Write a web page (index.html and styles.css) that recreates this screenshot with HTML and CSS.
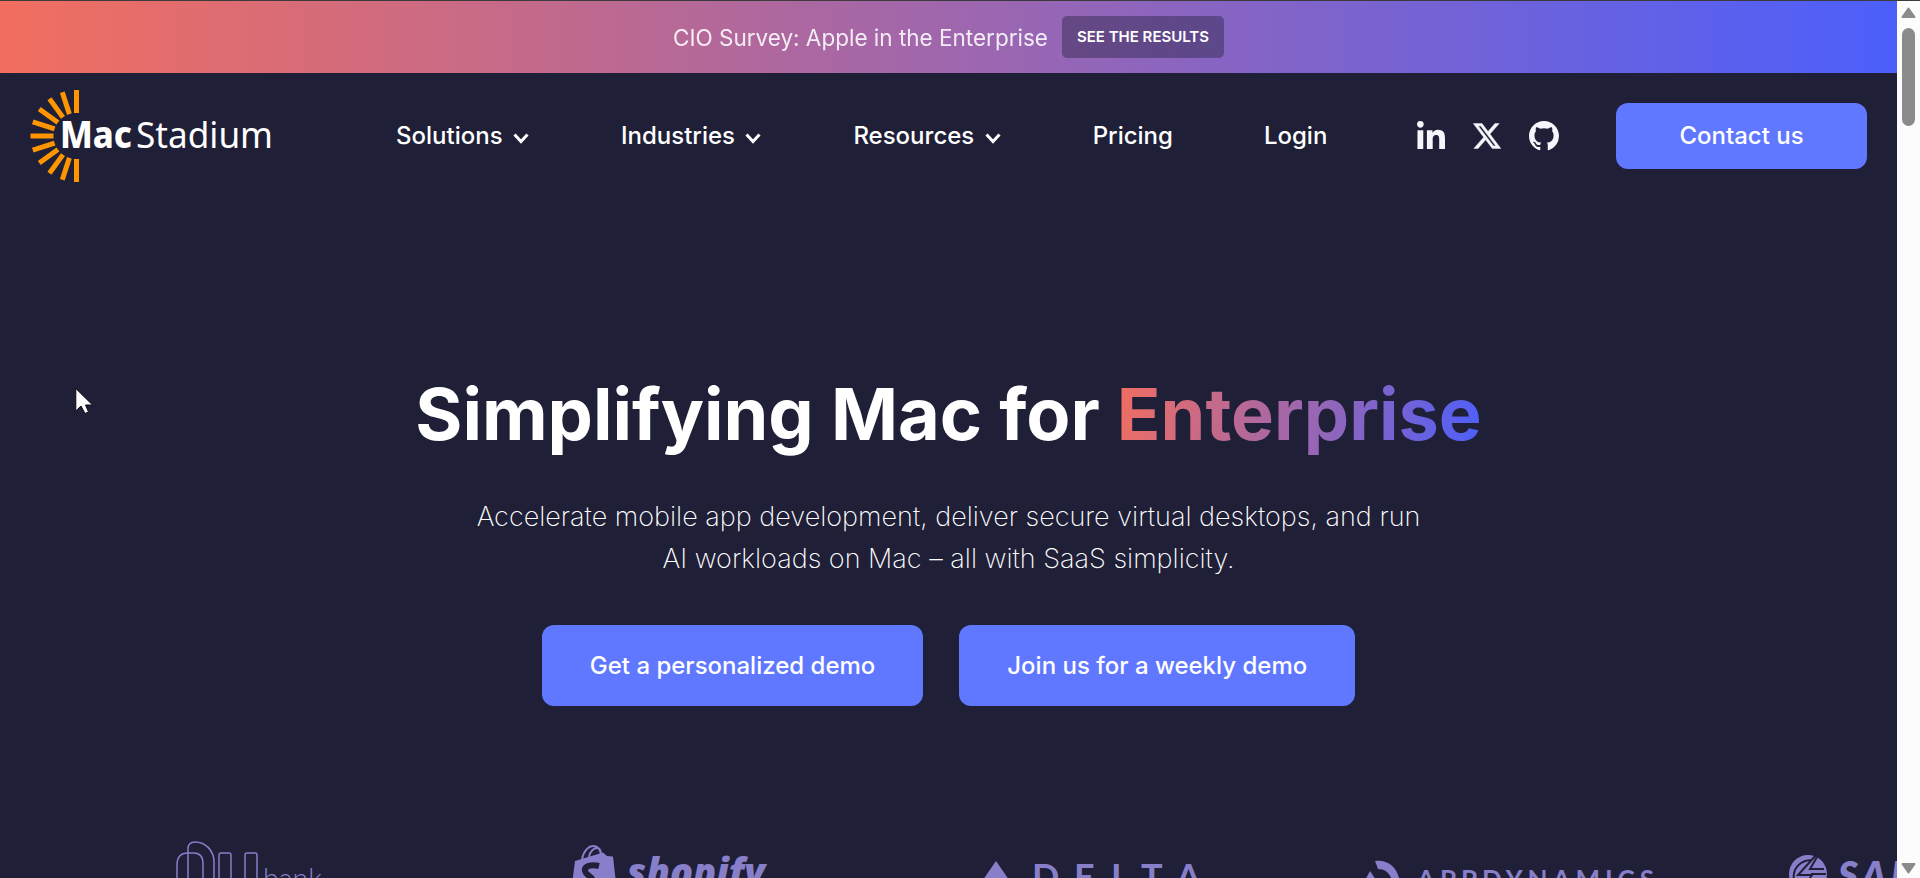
FILE: index.html
```html
<!DOCTYPE html>
<html lang="en">
<head>
    <meta charset="UTF-8">
    <meta name="viewport" content="width=device-width, initial-scale=1.0">
    <title>MacStadium</title>
    <link rel="stylesheet" href="styles.css">
</head>
<body>
    <div class="window">
        <div class="page">
            <div class="banner">
                <span class="banner-text">CIO Survey: Apple in the Enterprise</span>
                <a class="banner-button">SEE THE RESULTS</a>
            </div>

            <header class="header">
                <svg class="logo" viewBox="0 0 244 92" width="244" height="92">
                    <g stroke="#ff9500" stroke-width="5">
                        <path d="M46.5 0v23" />
                        <path d="M46.5 0v23" transform="rotate(-18 46.5 46)" />
                        <path d="M46.5 0v23" transform="rotate(-36 46.5 46)" />
                        <path d="M46.5 0v23" transform="rotate(-54 46.5 46)" />
                        <path d="M46.5 0v23" transform="rotate(-72 46.5 46)" />
                        <path d="M46.5 0v23" transform="rotate(-90 46.5 46)" />
                        <path d="M46.5 0v23" transform="rotate(-108 46.5 46)" />
                        <path d="M46.5 0v23" transform="rotate(-126 46.5 46)" />
                        <path d="M46.5 0v23" transform="rotate(-144 46.5 46)" />
                        <path d="M46.5 0v23" transform="rotate(-162 46.5 46)" />
                        <path d="M46.5 0v23" transform="rotate(-180 46.5 46)" />
                    </g>
                    <text class="logo-bold" x="30" y="58" textLength="72" lengthAdjust="spacingAndGlyphs">Mac</text>
                    <text class="logo-light" x="106" y="58" textLength="137" lengthAdjust="spacingAndGlyphs">Stadium</text>
                </svg>

                <nav class="nav">
                    <a>Solutions <svg class="chevron" viewBox="0 0 16 11"><path d="M1.5 1.5L8 8.5l6.500-7" /></svg></a>
                    <a>Industries <svg class="chevron" viewBox="0 0 16 11"><path d="M1.5 1.5L8 8.5l6.500-7" /></svg></a>
                    <a>Resources <svg class="chevron" viewBox="0 0 16 11"><path d="M1.5 1.5L8 8.5l6.500-7" /></svg></a>
                    <a>Pricing</a>
                    <a>Login</a>
                </nav>

                <div class="social">
                    <svg class="linkedin" viewBox="0 0 448 448" width="28" height="28"><path d="M100.280 448H7.400V148.900h92.880zM53.790 108.100C24.090 108.100 0 83.500 0 53.800a53.790 53.790 0 0 1 107.580 0c0 29.700-24.100 54.300-53.790 54.300zM447.900 448h-92.680V302.400c0-34.700-.7-79.200-48.290-79.200-48.290 0-55.690 37.700-55.690 76.700V448h-92.780V148.900h89.080v40.800h1.300c12.400-23.500 42.690-48.300 87.880-48.300 94 0 111.280 61.900 111.280 142.300V448z" /></svg>
                    <svg class="x" viewBox="1 2 22 20" width="28" height="26"><path d="M18.244 2.250h3.308l-7.227 8.260 8.502 11.240H16.170l-5.214-6.817L4.990 21.750H1.680l7.730-8.835L1.254 2.250H8.080l4.713 6.231zm-1.161 17.520h1.833L7.084 4.126H5.117z" /></svg>
                    <svg viewBox="0 0 16 16" width="30" height="30"><path d="M8 0C3.580 0 0 3.580 0 8c0 3.540 2.290 6.530 5.470 7.590.4.070.55-.17.55-.38 0-.19-.01-.82-.01-1.490-2.010.37-2.530-.49-2.690-.94-.09-.23-.48-.94-.82-1.130-.28-.15-.68-.52-.01-.53.63-.01 1.080.58 1.230.82.72 1.210 1.870.87 2.330.66.07-.52.28-.87.51-1.070-1.780-.2-3.640-.89-3.640-3.950 0-.87.31-1.590.82-2.150-.08-.2-.36-1.020.08-2.120 0 0 .67-.21 2.200.82.64-.18 1.320-.27 2-.27s1.360.09 2 .27c1.530-1.040 2.200-.82 2.200-.82.44 1.100.16 1.920.08 2.120.51.56.82 1.270.82 2.150 0 3.070-1.870 3.750-3.650 3.950.29.25.54.73.54 1.480 0 1.070-.01 1.930-.01 2.200 0 .21.15.46.55.38A8.010 8.010 0 0 0 16 8c0-4.420-3.580-8-8-8z" /></svg>
                </div>

                <a class="button contact">Contact us</a>
            </header>

            <main class="hero">
                <h1>Simplifying Mac for <span class="gradient">Enterprise</span></h1>
                <p>Accelerate mobile app development, deliver secure virtual desktops, and run<br>AI workloads on Mac – all with SaaS simplicity.</p>
                <div class="actions">
                    <a class="button">Get a personalized demo</a>
                    <a class="button">Join us for a weekly demo</a>
                </div>
            </main>

            <div class="clients">
                <svg class="client-nubank" viewBox="0 0 150 60" width="150" height="60">
                    <g class="outline">
                        <path d="M2 60V25Q2 13 13 13H19Q28 13 28 24V60" />
                        <path d="M13 60V9Q13 2 20 2C31 2 39 11 39 22V60" />
                        <path d="M44 60V15q0-2 2-2h8q2 0 2 2V60M70 60V15q0-2 2-2h8q2 0 2 2V60" />
                    </g>
                    <text class="nubank-text" x="88" y="49" textLength="59" lengthAdjust="spacingAndGlyphs">bank</text>
                </svg>
                <svg class="client-shopify" viewBox="0 0 200 60" width="200" height="60">
                    <path class="bag" d="M2 21L30 12.500l4 3.500 6 .5L45 60H-3z" />
                    <path class="handle" d="M9 19C11 10 16 6 20 6s7 3 8 8M16 17C17 11 21 8 24 8s4 3 4 7" />
                    <path class="bag-s" d="M26 26C18 24 11 26 12 31C13 36 20 36 20 42S12 46 8 43" />
                    <text class="shopify-text" x="54" y="46" textLength="138" lengthAdjust="spacingAndGlyphs">shopify</text>
                </svg>
                <svg class="client-delta" viewBox="0 0 230 60" width="230" height="60">
                    <path d="M18 21L40 53 18 44-4 53z" />
                    <text class="delta-text" x="54 96 133 163 198" y="50">DELTA</text>
                </svg>
                <svg class="client-appdynamics" viewBox="0 0 300 60" width="300" height="60">
                    <path d="M9 21C22 19 33 28 34 44l-7 4C27 36 21 29 12 29zM4 31L14 46H-4z" />
                    <text class="appdynamics-text" x="51" y="49" textLength="237" lengthAdjust="spacing">APPDYNAMICS</text>
                </svg>
                <svg class="client-last" viewBox="0 0 108 60" width="108" height="60">
                    <circle cx="19" cy="34" r="19" />
                    <path class="bolt" d="M5 40C3 29 11 20 23 20M28 14L9 35h14l-6 9M28 17l-7 12h14M22 34h15" />
                    <text class="last-text" x="49" y="49">SAI</text>
                </svg>
            </div>
        </div>

        <div class="scrollbar">
            <svg width="15" height="12" viewBox="0 0 15 12"><path d="M7.500 1.500L13.500 10h-12z" /></svg>
            <div class="thumb"></div>
            <svg class="down" width="15" height="12" viewBox="0 0 15 12"><path d="M7.500 10.500L13.500 2h-12z" /></svg>
        </div>
    </div>

    <svg class="cursor" viewBox="0 0 20 28" width="20" height="28"><path d="M.8 1.500V24l5.200-5 4 7.500 3.500-1.500-3-7H17.500z" /></svg>
</body>
</html>
```
FILE: styles.css
```css
* {
    box-sizing: border-box;
}
body {
    margin: 0;
    background: #1f1f37;
    color: #fff;
    font-family: Inter, sans-serif;
    overflow: hidden;
}
.window {
    display: flex;
    height: 878px;
    border-top: 1px solid #3b3b3b;
}
.page {
    width: 1897px;
    height: 877px;
    overflow: hidden;
}
.banner {
    display: flex;
    justify-content: center;
    align-items: center;
    gap: 14px;
    height: 72px;
    background: linear-gradient(90deg, #f26e5f, #4c5ffb);
}
.banner-text {
    font-size: 22.5px;
    opacity: 0.88;
}
.banner-button {
    height: 42px;
    padding: 0 15px;
    border-radius: 5px;
    background: rgba(31, 31, 55, 0.4);
    font-size: 15px;
    font-weight: 600;
    line-height: 42px;
}
.header {
    display: flex;
    align-items: center;
    height: 126px;
    padding: 0 30px;
}
.logo {
    flex: none;
    overflow: visible;
}
.logo text {
    fill: #fff;
    font-family: "Noto Sans", sans-serif;
    font-size: 37px;
}
.logo .logo-bold {
    font-weight: 800;
}
.nav {
    display: flex;
    gap: 91px;
    margin-left: 122px;
    padding-bottom: 2px;
    font-size: 24px;
    font-weight: 500;
    white-space: nowrap;
}
.chevron {
    width: 16px;
    height: 11px;
    margin: 0 1px 0 4px;
    fill: none;
    stroke: #fff;
    stroke-width: 3;
}
.social {
    display: flex;
    align-items: center;
    gap: 28px;
    margin-left: auto;
    fill: #f5f5fb;
}
.linkedin {
    margin-bottom: 3px;
}
.x {
    stroke: #f5f5fb;
    stroke-width: 0.4;
}
.button {
    height: 81px;
    padding: 0 48px;
    border-radius: 12px;
    background: #6078ff;
    font-size: 24px;
    font-weight: 500;
    line-height: 81px;
    text-align: center;
    white-space: nowrap;
}
.contact {
    width: 251px;
    height: 66px;
    margin-left: 57px;
    line-height: 66px;
}
.hero {
    display: flex;
    flex-direction: column;
    align-items: center;
    height: 641px;
    padding-top: 171px;
    text-align: center;
}
h1 {
    margin: 0;
    font-size: 72px;
    font-weight: 700;
    line-height: 87px;
}
.gradient {
    background: linear-gradient(100deg, #f26e5f, #4c5ffb);
    -webkit-background-clip: text;
    background-clip: text;
    color: transparent;
}
p {
    margin: 39px 0 0;
    font-size: 27px;
    font-weight: 200;
    line-height: 42px;
}
.actions {
    display: flex;
    gap: 36px;
    margin-top: 45px;
}
.clients {
    display: flex;
    height: 60px;
    padding-left: 175px;
    fill: #877fc9;
}
.clients svg {
    flex: none;
    overflow: visible;
}
.outline {
    fill: none;
    stroke: #877fc9;
    stroke-width: 1.5;
}
.nubank-text {
    font-family: Lato, sans-serif;
    font-size: 29px;
    font-weight: 300;
}
.client-shopify {
    margin-left: 248px;
}
.handle {
    fill: none;
    stroke: #877fc9;
    stroke-width: 2;
}
.bag-s {
    fill: none;
    stroke: #1f1f37;
    stroke-width: 6;
}
.shopify-text {
    font-family: "Open Sans", sans-serif;
    font-size: 38px;
    font-style: italic;
    font-weight: 800;
}
.client-delta {
    margin-left: 205px;
}
.delta-text {
    font-family: Lato, sans-serif;
    font-size: 36px;
    font-weight: 700;
}
.client-appdynamics {
    margin-left: 158px;
}
.appdynamics-text {
    font-family: Lato, sans-serif;
    font-size: 26px;
    font-weight: 700;
}
.client-last {
    margin-left: 123px;
}
.bolt {
    fill: none;
    stroke: #1f1f37;
    stroke-width: 2;
}
.last-text {
    font-family: Lato, sans-serif;
    font-size: 38px;
    font-style: italic;
    font-weight: 800;
    letter-spacing: 4px;
}
.scrollbar {
    display: flex;
    flex-direction: column;
    align-items: center;
    width: 23px;
    padding: 6px 0 4px;
    background: #fcfcfc;
    fill: #8b8b8b;
    stroke: #8b8b8b;
    stroke-linejoin: round;
    stroke-width: 2;
}
.thumb {
    width: 13px;
    height: 98px;
    margin-top: 9px;
    border-radius: 7px;
    background: #8b8b8b;
}
.down {
    margin-top: auto;
}
.cursor {
    position: absolute;
    left: 75px;
    top: 387px;
    fill: #fff;
    stroke: #0b0b14;
    stroke-width: 1;
}
```
